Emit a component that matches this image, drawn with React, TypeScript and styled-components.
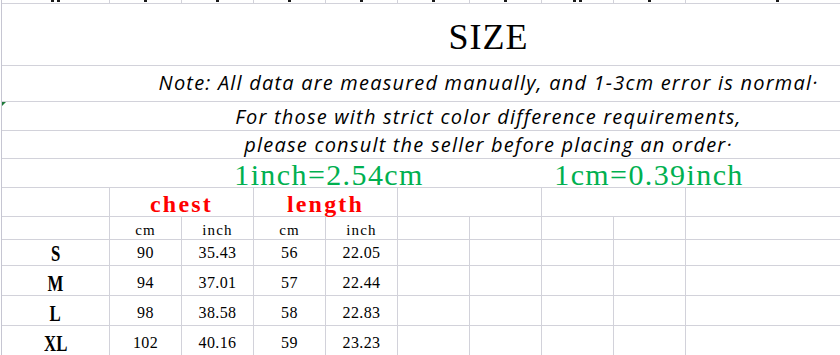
import React from "react";
import styled, { createGlobalStyle } from "styled-components";

const LINE = "#d2d2da";
const COLS = "108px repeat(8, 72px) 289px";

const GlobalStyle = createGlobalStyle`
  html, body { margin: 0; padding: 0; background: #fff; overflow: hidden; }
  body { width: 840px; height: 355px; }
`;

const Sheet = styled.div`
  margin-left: 1px;
  width: 973px;
  border-left: 1px solid #c6c6d2;
  font-family: "Liberation Serif", serif;
  color: #000;
`;

const Strip = styled.div`
  display: grid;
  grid-template-columns: ${COLS};
  height: 4px;
  box-sizing: border-box;
  border-bottom: 1px solid ${LINE};
  overflow: hidden;
`;

const StripCell = styled.div<{ $left?: number }>`
  box-sizing: border-box;
  border-right: 1px solid ${LINE};
  display: flex;
  align-items: flex-start;
  justify-content: ${(p) => (p.$left !== undefined ? "flex-start" : "center")};
  gap: 3px;
  padding-left: ${(p) => p.$left ?? 0}px;
`;

const Tick = styled.span`
  display: block;
  width: 3px;
  height: 2px;
  background: #1a1a1a;
`;

const MergedRow = styled.div<{ $h: number; $pt: number }>`
  position: relative;
  height: ${(p) => p.$h}px;
  box-sizing: border-box;
  border-bottom: 1px solid ${LINE};
  padding-top: ${(p) => p.$pt}px;
  text-align: center;
  white-space: nowrap;
`;

const ErrorMark = styled.span`
  position: absolute;
  top: 0;
  left: 0;
  width: 0;
  height: 0;
  border-top: 4px solid #1f7a3a;
  border-right: 4px solid transparent;
`;

const Title = styled.div`
  font-size: 36px;
  line-height: 36px;
  letter-spacing: 1px;
`;

const Note = styled.div`
  font-family: "Open Sans", sans-serif;
  font-style: italic;
  font-size: 20px;
  line-height: 20px;
  letter-spacing: 1.2px;
`;

const ConvRow = styled(MergedRow)`
  display: flex;
  padding-left: 167px;
`;

const Conv = styled.div`
  width: 320px;
  text-align: center;
  color: #00b050;
  font-size: 30px;
  line-height: 30px;
  letter-spacing: 1.4px;
`;

const Row = styled.div<{ $h: number }>`
  display: grid;
  grid-template-columns: ${COLS};
  height: ${(p) => p.$h}px;
`;

const Cell = styled.div<{ $span?: number; $pt?: number }>`
  grid-column: span ${(p) => p.$span ?? 1};
  box-sizing: border-box;
  border-right: 1px solid ${LINE};
  border-bottom: 1px solid ${LINE};
  padding-top: ${(p) => p.$pt ?? 0}px;
  text-align: center;
  white-space: nowrap;
`;

const Head = styled.span`
  color: #ff0000;
  font-weight: bold;
  font-size: 24px;
  line-height: 24px;
  letter-spacing: 2.2px;
`;

const Unit = styled.span`
  font-size: 15px;
  line-height: 15px;
  letter-spacing: 1.2px;
`;

const Num = styled.span`
  font-size: 16px;
  line-height: 16px;
  letter-spacing: 0.4px;
`;

const SizeLabel = styled.span`
  display: inline-block;
  font-weight: bold;
  font-size: 24px;
  line-height: 24px;
  transform: scaleX(0.7);
`;

const rows = [
  ["S", "90", "35.43", "56", "22.05"],
  ["M", "94", "37.01", "57", "22.44"],
  ["L", "98", "38.58", "58", "22.83"],
  ["XL", "102", "40.16", "59", "23.23"],
];

const stripMarks = [2, 1, 1, 1, 1, 1, 1, 2, 1];

export default function App() {
  return (
    <>
      <GlobalStyle />
      <Sheet>
        <Strip>
          {stripMarks.map((n, i) => (
            <StripCell key={i}>
              {Array.from({ length: n }, (_, k) => (
                <Tick key={k} />
              ))}
            </StripCell>
          ))}
          <StripCell $left={90}>
            <Tick />
          </StripCell>
        </Strip>
        <MergedRow $h={62} $pt={15}>
          <Title>SIZE</Title>
        </MergedRow>
        <MergedRow $h={36} $pt={7}>
          <Note>Note: All data are measured manually, and 1-3cm error is normal·</Note>
        </MergedRow>
        <MergedRow $h={29} $pt={5}>
          <ErrorMark />
          <Note>For those with strict color difference requirements,</Note>
        </MergedRow>
        <MergedRow $h={28} $pt={4}>
          <Note>please consult the seller before placing an order·</Note>
        </MergedRow>
        <ConvRow $h={29} $pt={1}>
          <Conv>1inch=2.54cm</Conv>
          <Conv>1cm=0.39inch</Conv>
        </ConvRow>
        <Row $h={29}>
          <Cell />
          <Cell $span={2} $pt={4}>
            <Head>chest</Head>
          </Cell>
          <Cell $span={2} $pt={4}>
            <Head>length</Head>
          </Cell>
          <Cell $span={2} />
          <Cell $span={2} />
          <Cell />
        </Row>
        <Row $h={19}>
          <Cell />
          <Cell $pt={4}><Unit>cm</Unit></Cell>
          <Cell $pt={4}><Unit>inch</Unit></Cell>
          <Cell $pt={4}><Unit>cm</Unit></Cell>
          <Cell $pt={4}><Unit>inch</Unit></Cell>
          <Cell />
          <Cell />
          <Cell />
          <Cell />
          <Cell />
        </Row>
        {rows.map((r) => (
          <Row $h={30} key={r[0]}>
            <Cell $pt={5}><SizeLabel>{r[0]}</SizeLabel></Cell>
            {r.slice(1).map((v, i) => (
              <Cell $pt={8} key={i}><Num>{v}</Num></Cell>
            ))}
            <Cell />
            <Cell />
            <Cell />
            <Cell />
            <Cell />
          </Row>
        ))}
      </Sheet>
    </>
  );
}
